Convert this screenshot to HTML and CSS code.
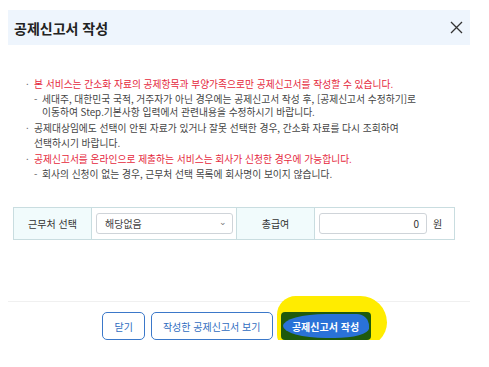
FILE: index.html
```html
<!DOCTYPE html>
<html lang="ko">
<head>
  <meta charset="UTF-8" />
  <title>공제신고서 작성</title>
  <link rel="stylesheet" href="styles.css">
</head>
<body>
  <div class="modal">
    <div class="modal-head">
      <h2>공제신고서 작성</h2>
      <span class="close">
        <svg width="13" height="13" viewBox="0 0 13 13"><path d="M1 1L12 12M12 1L1 12" stroke="#333" stroke-width="1.3"/></svg>
      </span>
    </div>

    <ul class="notice">
      <li class="red">본 서비스는 간소화 자료의 공제항목과 부양가족으로만 공제신고서를 작성할 수 있습니다.
        <p class="sub">세대주, 대한민국 국적, 거주자가 아닌 경우에는 공제신고서 작성 후, [공제신고서 수정하기]로<br>이동하여 Step.기본사항 입력에서 관련내용을 수정하시기 바랍니다.</p>
      </li>
      <li class="tall">공제대상임에도 선택이 안된 자료가 있거나 잘못 선택한 경우, 간소화 자료를 다시 조회하여<br>선택하시기 바랍니다.</li>
      <li class="red">공제신고서를 온라인으로 제출하는 서비스는 회사가 신청한 경우에 가능합니다.
        <p class="sub">회사의 신청이 없는 경우, 근무처 선택 목록에 회사명이 보이지 않습니다.</p>
      </li>
    </ul>

    <div class="form-row">
      <div class="label">근무처 선택</div>
      <div class="cell">
        <div class="select">해당없음<span class="caret">⌄</span></div>
      </div>
      <div class="label">총급여</div>
      <div class="cell">
        <div class="num">0</div><span class="unit">원</span>
      </div>
    </div>

    <div class="modal-foot">
      <button class="btn">닫기</button>
      <button class="btn">작성한 공제신고서 보기</button>
      <span class="mark">
        <button class="btn primary"><span class="ink">공제신고서 작성</span></button>
      </span>
    </div>
  </div>
</body>
</html>
```

FILE: styles.css
```css
body {
  margin: 0;
  background: #fff;
  font-family: "Noto Sans CJK KR", "Noto Sans", sans-serif;
  color: #333;
}
.modal {
  width: 462px;
  margin: 10px 0 0 8px;
}
.modal-head {
  height: 35px;
  background: #eef5fd;
  display: flex;
  align-items: center;
  justify-content: space-between;
  padding: 0 6px;
}
.modal-head h2 {
  margin: 0;
  font-size: 14px;
  font-weight: 700;
  color: #222;
}
.close {
  display: flex;
  margin-right: 1px;
}
.notice {
  list-style: none;
  margin: 33px 0 0;
  padding: 0 0 0 18px;
  font-size: 9.75px;
  line-height: 13px;
  color: #444;
}
.notice li {
  position: relative;
  padding-left: 8px;
  margin-bottom: 2px;
}
.notice li::before {
  content: "·";
  position: absolute;
  left: 0;
  top: 0;
  color: #555;
}
.notice li.tall {
  line-height: 15px;
  margin-bottom: 2px;
}
.notice .red {
  color: #e5283c;
}
.notice .sub {
  margin: 2px 0 0;
  padding-left: 8px;
  position: relative;
  color: #444;
}
.notice .sub::before {
  content: "-";
  position: absolute;
  left: 0;
  color: #666;
}
.form-row {
  display: grid;
  grid-template-columns: 79px 144px 79px 140px;
  width: 442px;
  height: 31px;
  margin: 26px 0 0 5px;
  border-top: 1px solid #c9dde0;
  border-bottom: 1px solid #c9dde0;
  font-size: 10px;
  color: #333;
}
.label {
  background: #f1fbfc;
  border-left: 1px solid #c9dde0;
  border-right: 1px solid #c9dde0;
  display: flex;
  align-items: center;
  justify-content: center;
}
.cell {
  display: flex;
  align-items: center;
  padding-left: 4px;
}
.cell:last-child {
  border-right: 1px solid #c9dde0;
}
.select {
  width: 122px;
  height: 19px;
  border: 1px solid #cfd4d9;
  border-radius: 3px;
  padding: 0 5px 0 8px;
  display: flex;
  align-items: center;
  justify-content: space-between;
  color: #444;
}
.caret {
  font-size: 9px;
  color: #777;
  line-height: 1;
  margin-top: -5px;
}
.num {
  width: 99px;
  height: 19px;
  border: 1px solid #cfd4d9;
  border-radius: 3px;
  padding-right: 7px;
  display: flex;
  align-items: center;
  justify-content: flex-end;
  color: #333;
}
.unit {
  margin-left: 6px;
}
.modal-foot {
  margin-top: 61px;
  border-top: 1px solid #f0f0f0;
  display: flex;
  justify-content: center;
  align-items: center;
  gap: 6px;
  padding: 10px 5px 0 0;
}
.btn {
  font-family: inherit;
  height: 28px;
  padding: 0 11px;
  font-size: 10px;
  border: 1px solid #3b78c9;
  border-radius: 5px;
  background: #fff;
  color: #2f6cc0;
}
.mark {
  position: relative;
  display: flex;
  margin-left: 2px;
}
.mark::before {
  content: "";
  position: absolute;
  left: -4px;
  top: -16px;
  width: 110px;
  height: 50px;
  background: #ffec00;
  border-radius: 24px 34px 30px 14px;
}
.btn.primary {
  position: relative;
  background: #1f5a0c;
  border: none;
  border-radius: 4px;
  width: 90px;
  padding: 0;
  color: #fff;
  font-weight: 700;
}
.ink {
  display: flex;
  align-items: center;
  justify-content: center;
  height: 24px;
  width: 86px;
  margin: 0 auto;
  background: #2a72d8;
  border-radius: 50% 12px 40% 50%;
}
```
